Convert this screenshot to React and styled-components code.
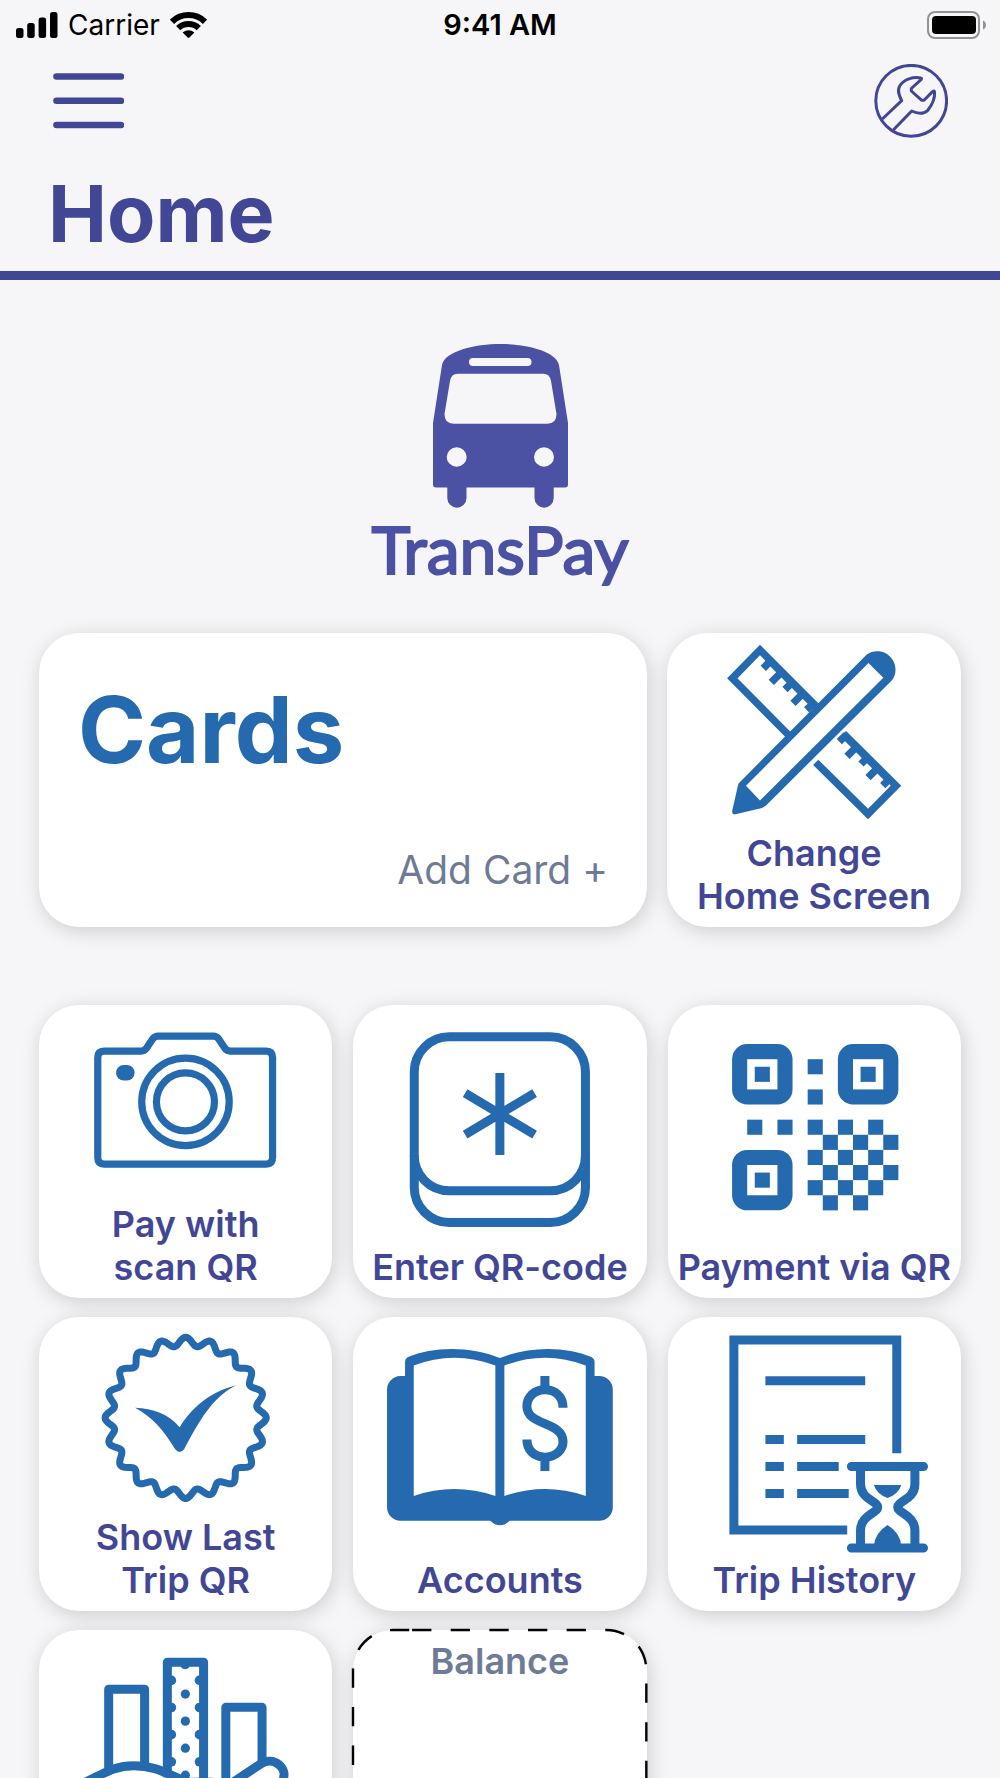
import React from "react";
import styled, { createGlobalStyle, css } from "styled-components";

const indigo = "#424795";
const blue = "#256aaf";
const slate = "#6e7b96";
const canvas = "#f6f6f9";

const GlobalStyle = createGlobalStyle`
  *, *::before, *::after { box-sizing: border-box; }
  body {
    margin: 0;
    background: ${canvas};
    color: ${indigo};
    font-family: Inter, "Liberation Sans", sans-serif;
  }
  button { font: inherit; color: inherit; cursor: pointer; }
`;

const Screen = styled.div`
  height: 100vh;
  overflow: hidden;
  background: ${canvas};
`;

const StatusBar = styled.div`
  display: grid;
  grid-template-columns: 1fr auto 1fr;
  align-items: center;
  height: 48px;
  padding: 2px 14px 0;
  color: #000;
  font-size: 28px;
  line-height: 46px;
`;

const StatusGroup = styled.div`
  display: flex;
  align-items: center;
  gap: 10px;
  justify-content: ${(p) => (p.$end ? "flex-end" : "flex-start")};
`;

const Clock = styled.time`
  font-size: 29px;
  font-weight: 600;
`;

const Header = styled.header`
  border-bottom: 9px solid ${indigo};
`;

const Toolbar = styled.nav`
  display: flex;
  align-items: center;
  justify-content: space-between;
  padding: 16px 52px 0;
`;

const IconButton = styled.button`
  display: flex;
  padding: 0;
  border: 0;
  background: none;
`;

const Title = styled.h1`
  margin: 27px 0 0;
  padding: 0 48px 10px;
  font-size: 79px;
  line-height: 96px;
  font-weight: 700;
`;

const Main = styled.main`
  padding: 64px 39px 40px;
`;

const Brand = styled.div`
  display: flex;
  flex-direction: column;
  align-items: center;
  margin-bottom: 43px;
  color: #4b51a3;
`;

const BrandName = styled.span`
  font-family: Lato, "Open Sans", sans-serif;
  font-size: 66px;
  line-height: 82px;
  -webkit-text-stroke: 2px currentColor;
`;

const TopGrid = styled.div`
  display: grid;
  grid-template-columns: repeat(3, 1fr);
  gap: 20px;
  margin-bottom: 78px;
`;

const TileGrid = styled.div`
  display: grid;
  grid-template-columns: repeat(3, 1fr);
  gap: 19px 21px;
`;

const surface = css`
  border: 0;
  border-radius: 40px;
  background: #fff;
  box-shadow: 2px 4px 20px rgba(0, 0, 0, 0.17);
`;

const CardsPanel = styled.section`
  ${surface}
  grid-column: span 2;
  display: flex;
  flex-direction: column;
  justify-content: space-between;
  padding: 39px 39px 33px;
`;

const CardsTitle = styled.h2`
  margin: 0;
  color: ${blue};
  font-size: 92px;
  line-height: 116px;
  font-weight: 700;
`;

const AddCard = styled.button`
  align-self: flex-end;
  padding: 0;
  border: 0;
  background: none;
  color: ${slate};
  font-size: 39px;
  line-height: 48px;
`;

const TileButton = styled.button`
  ${surface}
  position: relative;
  display: flex;
  flex-direction: column;
  justify-content: ${(p) => (p.$labelFirst ? "flex-start" : "flex-end")};
  aspect-ratio: 1;
  min-width: 0;
  padding: ${(p) => (p.$labelFirst ? "10px 0 0" : "0 0 9px")};
  color: ${(p) => (p.$labelFirst ? slate : indigo)};
`;

const TileArt = styled.svg`
  display: block;
  flex: 1;
  width: 100%;
  min-height: 0;
`;

const TileLabel = styled.span`
  font-size: 36px;
  line-height: 43px;
  font-weight: 600;
  text-align: center;
  white-space: pre-line;
`;

const DashedOutline = styled.svg`
  position: absolute;
  inset: 0;
  width: 100%;
  height: 100%;
  overflow: visible;
  pointer-events: none;
`;

function Signal() {
  return (
    <svg width="44" height="26" viewBox="-2 0 44 26" aria-hidden="true">
      <rect x="0" y="16" width="7.5" height="10" rx="2.5" />
      <rect x="11.2" y="11" width="7.5" height="15" rx="2.5" />
      <rect x="22.6" y="5.6" width="7.5" height="20.4" rx="2.5" />
      <rect x="34" y="0" width="7.5" height="26" rx="2.5" />
    </svg>
  );
}

function Wifi() {
  return (
    <svg width="37" height="28" viewBox="0 0 37 28" aria-hidden="true">
      <g fill="none" stroke="#000" strokeWidth="6">
        <path d="M2 10.8A23.7 23.7 0 0 1 35 10.8" />
        <path d="M8.2 17.2A14.8 14.8 0 0 1 28.8 17.2" />
      </g>
      <path d="M12.6 21.6Q18.5 16.8 24.4 21.6L19.4 26.6Q18.5 27.4 17.6 26.6Z" />
    </svg>
  );
}

function Battery() {
  return (
    <svg width="59" height="28" viewBox="0 0 59 28" aria-hidden="true">
      <rect x="1" y="1" width="51" height="26" rx="7" fill="none" stroke="#929294" strokeWidth="2" />
      <rect x="5" y="5" width="44" height="18" rx="4" />
      <path d="M56 9.5Q59 11 59 14T56 18.5Z" fill="#929294" />
    </svg>
  );
}

function MenuLines() {
  return (
    <svg width="72" height="56" viewBox="0 0 72 56" aria-hidden="true">
      <g stroke={indigo} strokeWidth="6.6" strokeLinecap="round">
        <path d="M4.5 3.5H69" />
        <path d="M4.5 27.7H69" />
        <path d="M4.5 52H69" />
      </g>
    </svg>
  );
}

function Wrench() {
  return (
    <svg width="74" height="74" viewBox="0 0 74 74" aria-hidden="true">
      <g fill="none" stroke={indigo} strokeWidth="3" strokeLinejoin="round">
        <circle cx="37.2" cy="36.8" r="35.4" />
        <path d="M8.3 55L27.7 36.7C25 31.5 22.8 26.5 26 21.5C30 15.5 39 12.5 46.7 14Q48 14.2 47.3 15.3L37.3 24.5V27L47.5 36.2H50L58.5 27.6Q60.5 26 60.6 28.2C61 34 58 41 53.8 46.3C49.5 50.2 43 49.6 37.7 47L19.3 66" />
      </g>
    </svg>
  );
}

function Bus() {
  return (
    <svg width="135" height="164" viewBox="0 0 135 164" aria-hidden="true">
      <path
        fill="currentColor"
        fillRule="evenodd"
        d="M9 21C12 7 42 0 67.5 0S123 7 126 21L135 79V140.500Q135 143.500 132 143.500H3Q0 143.500 0 140.500V79ZM40 14A4 4 0 0 0 40 22H94.500A4 4 0 0 0 94.500 14ZM24.500 29.700Q18.300 29.700 17 37L11.500 70Q11.500 79.700 20.500 79.700H114.500Q123.500 79.700 123.500 70L118 37Q116.700 29.700 110.500 29.700ZM13.700 113A10 9.700 0 0 0 33.700 113A10 9.700 0 0 0 13.700 113ZM101 113A10 9.700 0 0 0 121 113A10 9.700 0 0 0 101 113Z"
      />
      <path
        fill="currentColor"
        d="M14.300 141H33.500V154A9.600 9.700 0 0 1 14.300 154ZM101.500 141H120.700V154A9.600 9.700 0 0 1 101.500 154Z"
      />
    </svg>
  );
}

function RulerPencilArt() {
  return (
    <TileArt viewBox="0 0 294 199" aria-hidden="true">
      <g fill="none" stroke={blue} strokeWidth="7.4">
        <path d="M122 102.500L65.300 45.300L93 17L151 75" />
        <path d="M148.700 129.300L201 181L229 152.700L176.500 100.500" />
        <path d="M100 26L147 73M179.500 105.500L223 149" strokeWidth="6" />
        <path
          strokeWidth="7.400"
          d="M103.700 27.700L96.300 35.300M114.800 38.800L104.300 49.300M125.300 49.300L118 56.500M136.200 60.200L126 70.300M146.500 70.500L139.500 76.700M179.500 101.500L172.300 108.700M189.700 113.700L180 123.300M200.500 124.500L194 131M210.800 134.800L201 144.600M222.200 146.200L215.700 152.600"
        />
      </g>
      <path
        fill={blue}
        d="M72 150L199.500 21.700A18.300 18.300 0 0 1 225 47.300L99 172.500Q97 174.300 94 175.300L68.500 181.300Q64.500 181.500 65.300 177.500L70.800 153Q71.200 151 72 150Z"
      />
      <path fill="#fff" d="M79 152.700L201.500 30L216.300 44.700L93 167.500Z" />
    </TileArt>
  );
}

function CameraArt() {
  return (
    <TileArt viewBox="0 0 293 198" aria-hidden="true">
      <g fill="none" stroke={blue} strokeWidth="7.200">
        <path d="M65 46H102Q105.500 46 107.500 43L113.500 34Q115.500 31 119 31H174Q177.500 31 179.500 34L185.500 43Q187.500 46 191 46H227Q233.300 46 233.300 52.500V152.300Q233.300 158.800 227 158.800H65Q58.700 158.800 58.700 152.300V52.500Q58.700 46 65 46Z" />
        <circle cx="146.300" cy="96.700" r="43.700" />
        <circle cx="146.300" cy="96.700" r="29" />
      </g>
      <rect x="77" y="60" width="18.500" height="15.300" rx="7.600" fill={blue} />
    </TileArt>
  );
}

function KeyArt() {
  return (
    <TileArt viewBox="0 0 293 241" aria-hidden="true">
      <g fill="none" stroke={blue} strokeWidth="9">
        <rect x="61.200" y="31.800" width="171" height="185.400" rx="35" />
        <path d="M61.200 150A35 35 0 0 0 96.200 185.500H197.200A35 35 0 0 0 232.200 150" />
        <path d="M146.700 68V149.700M112 88L181.400 129.400M181.400 88L112 129.400" />
      </g>
    </TileArt>
  );
}

const finders = [[0, 0], [7, 0], [0, 7]];
const modules = [
  [5, 1], [5, 3], [1, 5], [3, 5],
  [5, 5], [7, 5], [9, 5], [6, 6], [8, 6], [10, 6],
  [5, 7], [7, 7], [9, 7], [6, 8], [8, 8], [10, 8],
  [5, 9], [7, 9], [9, 9], [6, 10], [8, 10],
];

function QrArt() {
  return (
    <TileArt viewBox="0 0 293 241" aria-hidden="true">
      <g transform="translate(64 39) scale(15.1)" fill={blue}>
        {finders.map(([x, y]) => (
          <g key={`${x}-${y}`}>
            <rect x={x} y={y} width="4" height="4" rx="1" />
            <rect x={x + 1} y={y + 1} width="2" height="2" fill="#fff" />
            <rect x={x + 1.5} y={y + 1.5} width="1" height="1" />
          </g>
        ))}
        {modules.map(([x, y]) => (
          <rect key={`${x}-${y}`} x={x} y={y} width="1" height="1" />
        ))}
      </g>
    </TileArt>
  );
}

const scallop =
  Array.from({ length: 360 }, (_, i) => {
    const angle = (i * Math.PI) / 180;
    const radius = 76.2 + 4.3 * Math.cos(20 * angle);
    const x = 146.5 + radius * Math.sin(angle);
    const y = 100.7 - radius * Math.cos(angle);
    return `${i ? "L" : "M"}${x.toFixed(2)} ${y.toFixed(2)}`;
  }).join("") + "Z";

function BadgeArt() {
  return (
    <TileArt viewBox="0 0 293 198" aria-hidden="true">
      <path d={scallop} fill="none" stroke={blue} strokeWidth="7" strokeLinejoin="round" />
      <path
        fill={blue}
        d="M96 90.500C114 91.500 129 96 140.500 110C152 91 170 75 197 68C172 81 160 104 145 132Q140.500 137.500 136 132C125 113 112 99 96 90.500Z"
      />
    </TileArt>
  );
}

function BookArt() {
  return (
    <TileArt viewBox="0 0 293 241" aria-hidden="true">
      <path
        fill={blue}
        d="M47 59H52V45Q52 41.500 55 40C80 29 118 29 146.700 41C175 29 213 29 238 40Q241.300 41.500 241.300 45V59H246A13.500 13.500 0 0 1 259.500 72.500V190A13.500 13.500 0 0 1 246 203.500H156.500Q147 212.500 137 203.500H47.500A13.500 13.500 0 0 1 34 190V72.500A13.500 13.500 0 0 1 47 59Z"
      />
      <path
        fill="#fff"
        d="M60.700 48.500Q101 33 142.200 48.500V178.700Q101 165 60.700 178.700ZM151.200 48.500Q192 33 232.500 48.500V178.700Q192 165 151.200 178.700Z"
      />
      <path
        fill="none"
        stroke={blue}
        strokeWidth="9"
        d="M191.700 59V73M191.700 140V153.700M209.800 90.700C209.800 79 202 72.700 191.700 72.700C181 72.700 173.700 80 173.700 89C173.700 109 209.800 104 209.800 124.300C209.800 133 202 140 191.700 140C181 140 173.700 133 173.700 122.300"
      />
    </TileArt>
  );
}

function HistoryArt() {
  return (
    <TileArt viewBox="0 0 293 241" aria-hidden="true">
      <g fill="none" stroke={blue} strokeWidth="9">
        <path d="M228.500 136V22.900H65.800V212.700H179" />
        <path d="M97.300 63.700H197M97.300 122.300H115.700M129 122.300H197M97.300 149.300H115.700M129 149.300H170.500M97.300 176.300H115.700M129 176.300H180.500" />
        <path strokeLinecap="round" d="M183.200 149.300H255.200M183.200 230.700H255.200" />
        <path d="M192.300 150V167C192.300 182 209.500 184 209.500 189.900S192.300 198 192.300 213V230M246.600 150V167C246.600 182 229.400 184 229.400 189.900S246.600 198 246.600 213V230" />
      </g>
      <path
        fill={blue}
        d="M205.700 167.700H233Q230.500 176.500 219.300 180.800Q208.200 176.500 205.700 167.700ZM205.700 229Q206 216 219.300 207.700Q232.700 216 233 229Z"
      />
    </TileArt>
  );
}

const studs = [64, 91, 118, 145];
const notches = [50.3, 77.4, 104.5, 131.6];

function SkylineArt() {
  return (
    <TileArt viewBox="0 0 293 241" aria-hidden="true">
      <g fill="none" stroke={blue} strokeWidth="9" strokeLinejoin="round">
        <path d="M69.600 140V59.200H105.500V136" />
        <path d="M128.200 147V32.200H164.400V170" />
        <path d="M186.600 150V77.200H222.800V136" />
        <path d="M34 157C60 148 70 135.500 94.500 135.500C120 135.500 130 146 150 152H172C184 152 184 168 172 168H132M188 156L221 134C234 125 250 138 243 151L206 192C200 199 192 202 182 202H34" />
      </g>
      <g fill={blue}>
        <path d="M141.500 36A4.800 5 0 0 0 150.500 36Z" />
        {studs.map((y) => <circle key={y} cx="146.200" cy={y} r="4.600" />)}
        {notches.map((y) => (
          <g key={y}>
            <circle cx="132.200" cy={y} r="4.800" />
            <circle cx="160.300" cy={y} r="4.800" />
          </g>
        ))}
      </g>
    </TileArt>
  );
}

const tiles = [
  { label: "Pay with\nscan QR", Art: CameraArt },
  { label: "Enter QR-code", Art: KeyArt },
  { label: "Payment via QR", Art: QrArt },
  { label: "Show Last\nTrip QR", Art: BadgeArt },
  { label: "Accounts", Art: BookArt },
  { label: "Trip History", Art: HistoryArt },
];

function Tile({ label, Art }) {
  return (
    <TileButton type="button">
      <Art />
      <TileLabel>{label}</TileLabel>
    </TileButton>
  );
}

export default function App() {
  return (
    <Screen>
      <GlobalStyle />
      <StatusBar>
        <StatusGroup>
          <Signal />
          <span>Carrier</span>
          <Wifi />
        </StatusGroup>
        <Clock>9:41 AM</Clock>
        <StatusGroup $end>
          <Battery />
        </StatusGroup>
      </StatusBar>
      <Header>
        <Toolbar>
          <IconButton type="button" aria-label="Menu"><MenuLines /></IconButton>
          <IconButton type="button" aria-label="Settings"><Wrench /></IconButton>
        </Toolbar>
        <Title>Home</Title>
      </Header>
      <Main>
        <Brand>
          <Bus />
          <BrandName>TransPay</BrandName>
        </Brand>
        <TopGrid>
          <CardsPanel>
            <CardsTitle>Cards</CardsTitle>
            <AddCard type="button">Add Card +</AddCard>
          </CardsPanel>
          <Tile label={"Change\nHome Screen"} Art={RulerPencilArt} />
        </TopGrid>
        <TileGrid>
          {tiles.map((tile) => <Tile key={tile.label} {...tile} />)}
          <TileButton type="button" aria-label="City">
            <SkylineArt />
            <TileLabel>{"\u00a0"}</TileLabel>
          </TileButton>
          <TileButton type="button" $labelFirst>
            <DashedOutline viewBox="0 0 293 293" aria-hidden="true">
              <path
                fill="none"
                stroke="#000"
                strokeWidth="2.400"
                strokeDasharray="19.300 19.300"
                d="M59 0H253A40 40 0 0 1 293 40V253A40 40 0 0 1 253 293H40A40 40 0 0 1 0 253V40A40 40 0 0 1 40 0H59"
              />
            </DashedOutline>
            <TileLabel>Balance</TileLabel>
          </TileButton>
        </TileGrid>
      </Main>
    </Screen>
  );
}
